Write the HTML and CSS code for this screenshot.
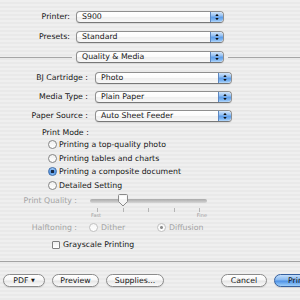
FILE: index.html
```html
<!DOCTYPE html>
<html>
<head>
<meta charset="utf-8">
<link rel="stylesheet" href="styles.css">
</head>
<body>
<div class="dialog">
  <div class="row r1">
    <span class="lbl lbl-a">Printer:</span>
    <div class="popup pop-a"><span class="pop-text">S900</span><span class="stepper"><svg width="12" height="12" viewBox="0 0 12 12"><path d="M4.3 5 L6 2.8 L7.7 5 Z M4.3 7 L6 9.2 L7.7 7 Z" fill="#111"/></svg></span></div>
  </div>
  <div class="row r2">
    <span class="lbl lbl-a">Presets:</span>
    <div class="popup pop-a"><span class="pop-text">Standard</span><span class="stepper"><svg width="12" height="12" viewBox="0 0 12 12"><path d="M4.3 5 L6 2.8 L7.7 5 Z M4.3 7 L6 9.2 L7.7 7 Z" fill="#111"/></svg></span></div>
  </div>
  <div class="row r3">
    <div class="line"></div>
    <div class="popup pop-a pop-sec"><span class="pop-text">Quality &amp; Media</span><span class="stepper"><svg width="12" height="12" viewBox="0 0 12 12"><path d="M4.3 5 L6 2.8 L7.7 5 Z M4.3 7 L6 9.2 L7.7 7 Z" fill="#111"/></svg></span></div>
    <div class="line"></div>
  </div>
  <div class="row r4">
    <span class="lbl lbl-b">BJ Cartridge :</span>
    <div class="popup pop-b"><span class="pop-text">Photo</span><span class="stepper"><svg width="12" height="12" viewBox="0 0 12 12"><path d="M4.3 5 L6 2.8 L7.7 5 Z M4.3 7 L6 9.2 L7.7 7 Z" fill="#111"/></svg></span></div>
  </div>
  <div class="row r5">
    <span class="lbl lbl-b">Media Type :</span>
    <div class="popup pop-b"><span class="pop-text">Plain Paper</span><span class="stepper"><svg width="12" height="12" viewBox="0 0 12 12"><path d="M4.3 5 L6 2.8 L7.7 5 Z M4.3 7 L6 9.2 L7.7 7 Z" fill="#111"/></svg></span></div>
  </div>
  <div class="row r5">
    <span class="lbl lbl-b">Paper Source :</span>
    <div class="popup pop-b"><span class="pop-text">Auto Sheet Feeder</span><span class="stepper"><svg width="12" height="12" viewBox="0 0 12 12"><path d="M4.3 5 L6 2.8 L7.7 5 Z M4.3 7 L6 9.2 L7.7 7 Z" fill="#111"/></svg></span></div>
  </div>
  <div class="mode-title">Print Mode :</div>
  <div class="radio-row"><span class="radio"></span><span>Printing a top-quality photo</span></div>
  <div class="radio-row"><span class="radio"></span><span>Printing tables and charts</span></div>
  <div class="radio-row"><span class="radio on"></span><span>Printing a composite document</span></div>
  <div class="radio-row"><span class="radio"></span><span>Detailed Setting</span></div>
  <div class="row quality">
    <span class="lbl lbl-c dis">Print Quality :</span>
    <div class="slider">
      <div class="track"></div>
      <svg class="thumb" width="12" height="13" viewBox="0 0 12 13"><path d="M1.5 1.5 Q1.5 0.5 2.5 0.5 L9.5 0.5 Q10.5 0.5 10.5 1.5 L10.5 7.5 L6 12 L1.5 7.5 Z" fill="#f4f4f4" stroke="#8a8a8a" stroke-width="1"/><path d="M2.5 2 L9.5 2 L9.5 5 L2.5 5 Z" fill="#ffffff" opacity="0.8"/></svg>
    </div>
  </div>
  <div class="scale">
    <div class="ticks"><i></i><i></i><i></i><i></i><i></i></div>
    <div class="scale-lbls"><span>Fast</span><span>Fine</span></div>
  </div>
  <div class="row halftone">
    <span class="lbl lbl-c dis">Halftoning :</span>
    <div class="opt opt-1"><span class="radio dis-r"></span><span class="dis">Dither</span></div>
    <div class="opt"><span class="radio dis-r dis-on"></span><span class="dis">Diffusion</span></div>
  </div>
  <div class="row check-row">
    <span class="check"></span><span>Grayscale Printing</span>
  </div>
  <div class="hr"></div>
  <div class="buttons">
    <span class="btn b-pdf">PDF <span class="tri">&#9660;</span></span>
    <span class="btn b-prev">Preview</span>
    <span class="btn b-sup">Supplies...</span>
    <span class="btn b-can">Cancel</span>
    <span class="btn b-print">Print</span>
  </div>
</div>
</body>
</html>
```

FILE: styles.css
```css
html, body {
  margin: 0;
  padding: 0;
}
body {
  width: 300px;
  height: 300px;
  overflow: hidden;
  background: repeating-linear-gradient(to bottom, #efefef 0px, #efefef 2px, #e9e9e9 2px, #e9e9e9 4px);
  font-family: "DejaVu Sans", sans-serif;
  font-size: 7.8px;
  color: #161616;
}
.dialog {
  width: 300px;
  height: 300px;
  overflow: hidden;
  padding-top: 11px;
  box-sizing: border-box;
  display: flex;
  flex-direction: column;
}
.row {
  display: flex;
  align-items: center;
  height: 12px;
  flex-shrink: 0;
}
.r2 { margin-top: 8px; }
.r3 { margin-top: 8px; }
.r4 { margin-top: 9px; }
.r5 { margin-top: 7px; }
.lbl {
  text-align: right;
  white-space: nowrap;
  line-height: 12px;
}
.lbl-a { width: 70px; margin-right: 6px; }
.lbl-b { width: 88px; margin-right: 7px; }
.lbl-c { width: 77px; }
.dis { color: #a3a3a3; }

.popup {
  height: 12px;
  box-sizing: border-box;
  border: 1px solid #8f8f8f;
  border-bottom-color: #777;
  border-radius: 4px;
  background: linear-gradient(to bottom, #ffffff 0%, #fbfbfb 45%, #efefef 55%, #f8f8f8 100%);
  display: flex;
  align-items: center;
  overflow: hidden;
  box-shadow: 0 1px 1px rgba(0,0,0,0.08);
}
.pop-a { width: 148px; }
.pop-b { width: 137px; }
.pop-sec { margin: 0 4px; flex-shrink: 0; }
.pop-text {
  flex: 1;
  padding-left: 5px;
  line-height: 10px;
  white-space: nowrap;
}
.stepper {
  width: 12px;
  height: 10px;
  border-left: 1px solid #5b86c0;
  background: linear-gradient(to bottom, #d2e6fb 0%, #8fbdf2 40%, #5d9de8 52%, #7fb6f2 80%, #b8dafb 100%);
  border-radius: 0 3px 3px 0;
  display: flex;
  align-items: center;
  justify-content: center;
}
.stepper svg { display: block; }
.line {
  flex: 1;
  height: 1px;
  background: #a6a6a6;
}

.mode-title {
  margin-top: 6px;
  padding-left: 42px;
  line-height: 10px;
  height: 10px;
}
.radio-row {
  display: flex;
  align-items: center;
  height: 13.6px;
  padding-left: 48px;
  white-space: nowrap;
}
.radio {
  width: 9px;
  height: 9px;
  box-sizing: border-box;
  border: 1px solid #858585;
  border-radius: 50%;
  background: linear-gradient(to bottom, #f0f0f0, #ffffff);
  margin-right: 2px;
  flex-shrink: 0;
}
.radio.on {
  border-color: #3b6aa8;
  background: radial-gradient(circle at 50% 50%, #1b2a44 0, #1b2a44 1.4px, transparent 1.9px), linear-gradient(to bottom, #a9cff6, #4d8fe0 55%, #8cc0f5);
}

.quality { margin-top: 2.6px; }
.slider {
  position: relative;
  margin-left: 13px;
  width: 117px;
  height: 12px;
  display: flex;
  align-items: center;
}
.track {
  width: 100%;
  height: 4px;
  border-radius: 2px;
  background: linear-gradient(to bottom, #a9a9a9, #d6d6d6);
  border: none;
}
.thumb {
  position: absolute;
  left: 27px;
  top: -1px;
}
.scale {
  margin-left: 90px;
  width: 117px;
  flex-shrink: 0;
}
.ticks {
  position: relative;
  height: 4px;
  margin-top: 1px;
  display: flex;
  justify-content: space-between;
  padding: 0 7px;
}
.ticks i {
  display: block;
  width: 1px;
  height: 4px;
  background: #b5b5b5;
}
.scale-lbls {
  display: flex;
  justify-content: space-between;
  font-size: 5px;
  line-height: 6px;
  height: 6px;
  color: #a0a0a0;
  padding-left: 1px;
}
.halftone { margin-top: 4px; }
.opt {
  display: flex;
  align-items: center;
  white-space: nowrap;
}
.opt-1 { margin-left: 12px; width: 68px; }
.radio.dis-r {
  border-color: #c2c2c2;
  background: linear-gradient(to bottom, #f6f6f6, #ffffff);
  margin-right: 3px;
}
.radio.dis-on {
  background: radial-gradient(circle at 50% 50%, #8d8d8d 0, #8d8d8d 1.2px, transparent 1.7px), linear-gradient(to bottom, #f6f6f6, #ffffff);
}
.check-row {
  margin-top: 5px;
  padding-left: 52px;
}
.check {
  width: 8px;
  height: 8px;
  box-sizing: border-box;
  border: 1px solid #7f7f7f;
  border-radius: 1px;
  background: linear-gradient(to bottom, #eeeeee, #ffffff);
  margin-right: 3px;
}
.hr {
  margin-top: 10px;
  height: 1px;
  background: #a3a3a3;
  flex-shrink: 0;
}
.buttons {
  margin-top: 12px;
  display: flex;
  padding-left: 3px;
  height: 13px;
  flex-shrink: 0;
}
.btn {
  height: 13px;
  box-sizing: border-box;
  border: 1px solid #8b8b8b;
  border-radius: 7px;
  background: linear-gradient(to bottom, #ffffff 0%, #f7f7f7 45%, #e6e6e6 55%, #fbfbfb 100%);
  line-height: 11px;
  text-align: center;
  white-space: nowrap;
  flex-shrink: 0;
  box-shadow: 0 1px 1px rgba(0,0,0,0.1);
}
.b-pdf { width: 42px; }
.tri { font-size: 5px; vertical-align: 1px; }
.b-prev { width: 47px; margin-left: 7px; }
.b-sup { width: 58px; margin-left: 7px; }
.b-can { width: 46px; margin-left: 57px; }
.b-print {
  width: 46px;
  margin-left: 7px;
  border-color: #36609e;
  background: linear-gradient(to bottom, #c3defb 0%, #86b8f1 45%, #4f92e6 55%, #9fd0fa 100%);
}
```
